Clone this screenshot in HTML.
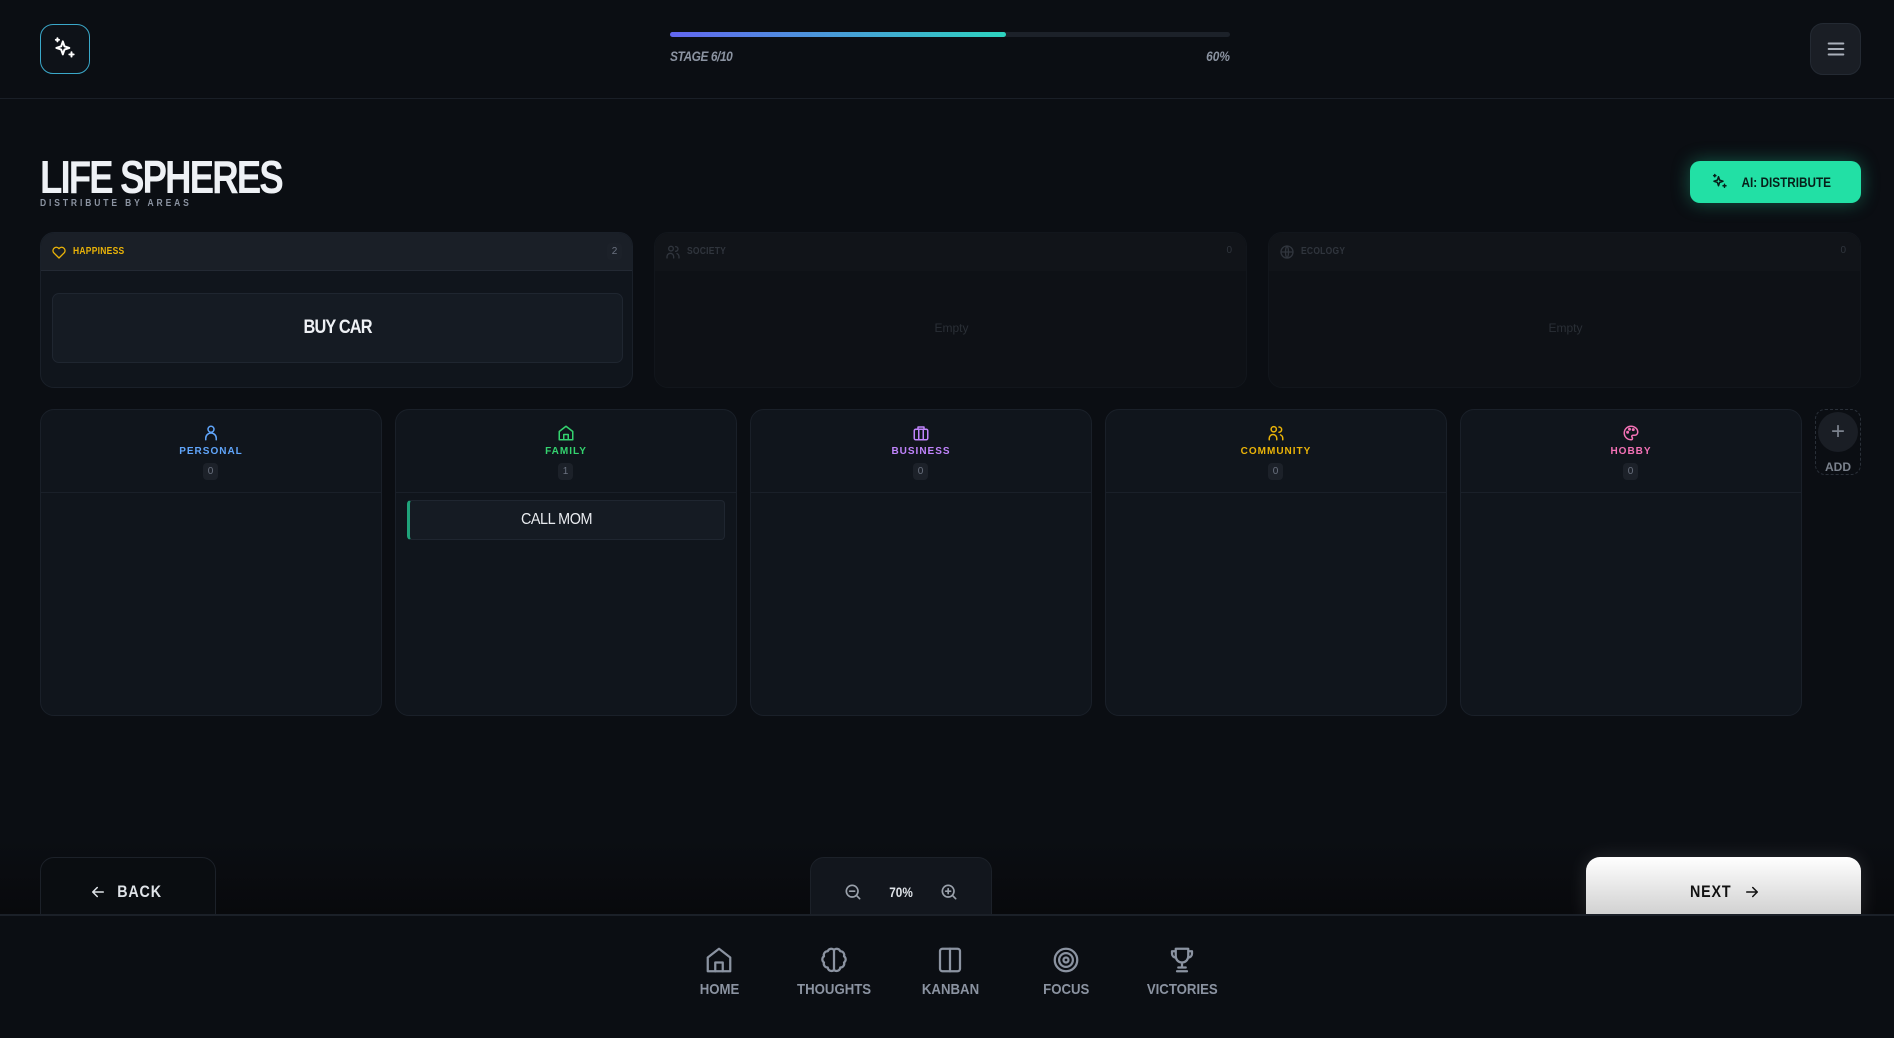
<!DOCTYPE html>
<html><head><meta charset="utf-8">
<style>
*{box-sizing:border-box;margin:0;padding:0}
body{width:1894px;height:1038px;background:#0b0e13;font-family:"Liberation Sans",sans-serif;color:#e5e7eb;position:relative;overflow:hidden}
.a{position:absolute}
.c{display:flex;align-items:center;justify-content:center}
.n{display:inline-block;transform:scaleX(.84)}
svg{fill:none;stroke-linecap:round;stroke-linejoin:round}
.card{background:#10151c;border:1px solid #1a2029;border-radius:14px}
.cnt{background:#1c2129;color:#6b7280;font-size:10px;border-radius:4px;width:15px;height:17px}
.lbl{font-weight:bold;font-size:10px;letter-spacing:1px}
.nav{width:100px;text-align:center;color:#8b93a1;font-weight:bold;font-size:15px}
</style></head><body>
<!-- header -->
<div class="a" style="left:0;top:0;width:1894px;height:99px;border-bottom:1px solid #1a1f27"></div>
<div class="a c" style="left:40px;top:24px;width:50px;height:50px;border-radius:13px;border:1.5px solid #3aa8c9;background:#0e1218">
<svg width="26" height="26" viewBox="0 0 24 24" stroke="#fff" stroke-width="1.8"><path d="M10 5l1.5 4.5L16 11l-4.5 1.5L10 17l-1.5-4.5L4 11l4.5-1.5z"/><path d="M5 2v3M3.5 3.5h3M18 15v4M16 17h4"/></svg></div>
<div class="a" style="left:670px;top:32px;width:560px;height:5px;border-radius:3px;background:#1c2129"></div>
<div class="a" style="left:670px;top:32px;width:336px;height:5px;border-radius:3px;background:linear-gradient(90deg,#6366f1,#2dd4bf)"></div>
<div class="a" style="left:670px;top:48px;font-size:14px;font-style:italic;font-weight:bold;color:#8b93a1;letter-spacing:-.5px;transform:scaleX(.85);transform-origin:left">STAGE 6/10</div>
<div class="a" style="left:1180px;top:48px;width:50px;text-align:right;font-size:14px;font-style:italic;font-weight:bold;color:#8b93a1;transform:scaleX(.85);transform-origin:right">60%</div>
<div class="a c" style="left:1810px;top:23px;width:51px;height:52px;border-radius:13px;background:#1a1e25;border:1px solid #242a33">
<svg width="22" height="22" viewBox="0 0 24 24" stroke="#aab0ba" stroke-width="2.2"><path d="M4 6h16M4 12h16M4 18h16"/></svg></div>
<!-- title -->
<div class="a" style="left:40px;top:150px;font-size:46px;font-weight:bold;letter-spacing:-2.5px;color:#eef1f5;transform:scaleX(.8);transform-origin:left">LIFE SPHERES</div>
<div class="a" style="left:40px;top:198px;font-size:10px;font-weight:bold;letter-spacing:3.4px;color:#8b93a1;transform:scaleX(.85);transform-origin:left">DISTRIBUTE BY AREAS</div>
<div class="a c" style="left:1690px;top:161px;width:171px;height:42px;border-radius:10px;background:#22e0a5;box-shadow:0 0 18px rgba(34,224,165,.35);color:#07201a;font-weight:bold;font-size:14px;gap:4px">
<svg width="18" height="18" viewBox="0 0 24 24" stroke="#07201a" stroke-width="2"><path d="M10 5l1.5 4.5L16 11l-4.5 1.5L10 17l-1.5-4.5L4 11l4.5-1.5z"/><path d="M5 2v3M3.5 3.5h3M18 15v4M16 17h4"/></svg><span class="n">AI: DISTRIBUTE</span></div>
<!-- top cards -->
<div class="a card" style="left:40px;top:232px;width:593px;height:156px;overflow:hidden">
 <div style="height:38px;background:#1a1f27;border-bottom:1px solid #232933;position:relative">
  <svg class="a" style="left:10px;top:11px" width="16" height="16" viewBox="0 0 24 24" stroke="#eab308" stroke-width="2"><path d="M12 21l-8-8a5 5 0 017-7l1 1 1-1a5 5 0 017 7z"/></svg>
  <div class="a lbl" style="left:32px;top:13px;color:#eab308;letter-spacing:.3px;transform:scaleX(.85);transform-origin:left">HAPPINESS</div>
  <div class="a c cnt" style="right:10px;top:10px">2</div>
 </div>
 <div class="a c" style="left:11px;top:60px;width:571px;height:70px;background:#151b23;border:1px solid #1f2630;border-radius:7px;font-weight:bold;font-size:19px;letter-spacing:-1px;color:#eef1f5"><span class="n" style="transform:scaleX(.86)">BUY CAR</span></div>
</div>
<div class="a card" style="left:654px;top:232px;width:593px;height:156px;overflow:hidden;background:#0e1116;border-color:#12161c">
 <div style="height:38px;background:#111419;position:relative">
  <svg class="a" style="left:10px;top:11px" width="16" height="16" viewBox="0 0 24 24" stroke="#30353d" stroke-width="2"><circle cx="9" cy="7" r="3.5"/><path d="M3 21v-2a5 5 0 0110 0v2M16 4a3.5 3.5 0 010 7M21 21v-2a5 5 0 00-3-4.5"/></svg>
  <div class="a lbl" style="left:32px;top:13px;color:#30353d;letter-spacing:.3px;transform:scaleX(.85);transform-origin:left">SOCIETY</div>
  <div class="a" style="right:14px;top:12px;color:#30353d;font-size:10px">0</div>
 </div>
 <div class="a" style="left:0;top:88px;width:593px;text-align:center;color:#2a2f36;font-size:12px">Empty</div>
</div>
<div class="a card" style="left:1268px;top:232px;width:593px;height:156px;overflow:hidden;background:#0e1116;border-color:#12161c">
 <div style="height:38px;background:#111419;position:relative">
  <svg class="a" style="left:10px;top:11px" width="16" height="16" viewBox="0 0 24 24" stroke="#30353d" stroke-width="2"><circle cx="12" cy="12" r="9"/><path d="M3 12h18M12 3c3 3 3 15 0 18M12 3c-3 3-3 15 0 18"/></svg>
  <div class="a lbl" style="left:32px;top:13px;color:#30353d;letter-spacing:.3px;transform:scaleX(.85);transform-origin:left">ECOLOGY</div>
  <div class="a" style="right:14px;top:12px;color:#30353d;font-size:10px">0</div>
 </div>
 <div class="a" style="left:0;top:88px;width:593px;text-align:center;color:#2a2f36;font-size:12px">Empty</div>
</div>
<!-- columns -->
<div class="a card" style="left:40px;top:409px;width:342px;height:307px"><div style="height:83px;border-bottom:1px solid #1a2029"></div></div>
<div class="a card" style="left:395px;top:409px;width:342px;height:307px"><div style="height:83px;border-bottom:1px solid #1a2029"></div></div>
<div class="a card" style="left:750px;top:409px;width:342px;height:307px"><div style="height:83px;border-bottom:1px solid #1a2029"></div></div>
<div class="a card" style="left:1105px;top:409px;width:342px;height:307px"><div style="height:83px;border-bottom:1px solid #1a2029"></div></div>
<div class="a card" style="left:1460px;top:409px;width:342px;height:307px"><div style="height:83px;border-bottom:1px solid #1a2029"></div></div>

<svg class="a" style="left:202px;top:424px" width="18" height="18" viewBox="0 0 24 24" stroke="#60a5fa" stroke-width="2"><circle cx="12" cy="7" r="4"/><path d="M5 21v-2a7 7 0 0114 0v2"/></svg>
<div class="a lbl" style="left:40px;top:446px;width:342px;text-align:center;color:#60a5fa">PERSONAL</div>
<div class="a c cnt" style="left:203px;top:463px">0</div>

<svg class="a" style="left:557px;top:424px" width="18" height="18" viewBox="0 0 24 24" stroke="#34d36f" stroke-width="2"><path d="M3 10l9-7 9 7v11H3z"/><path d="M9 21v-7h6v7"/></svg>
<div class="a lbl" style="left:395px;top:446px;width:342px;text-align:center;color:#34d36f">FAMILY</div>
<div class="a c cnt" style="left:558px;top:463px">1</div>
<div class="a c" style="left:407px;top:500px;width:318px;height:40px;padding-right:22px;background:#151b23;border:1px solid #1f2630;border-left:3px solid #1fa37a;border-radius:4px;font-size:16px;color:#e8ebef;letter-spacing:-.5px"><span class="n" style="transform:scaleX(.9)">CALL MOM</span></div>

<svg class="a" style="left:912px;top:424px" width="18" height="18" viewBox="0 0 24 24" stroke="#c084fc" stroke-width="2"><rect x="3" y="7" width="18" height="14" rx="2"/><path d="M8 7V4h8v3M9 7v14M15 7v14"/></svg>
<div class="a lbl" style="left:750px;top:446px;width:342px;text-align:center;color:#c084fc">BUSINESS</div>
<div class="a c cnt" style="left:913px;top:463px">0</div>

<svg class="a" style="left:1267px;top:424px" width="18" height="18" viewBox="0 0 24 24" stroke="#eab308" stroke-width="2"><circle cx="9" cy="7" r="3.5"/><path d="M3 21v-2a5 5 0 0110 0v2M16 4a3.5 3.5 0 010 7M21 21v-2a5 5 0 00-3-4.5"/></svg>
<div class="a lbl" style="left:1105px;top:446px;width:342px;text-align:center;color:#eab308">COMMUNITY</div>
<div class="a c cnt" style="left:1268px;top:463px">0</div>

<svg class="a" style="left:1622px;top:424px" width="18" height="18" viewBox="0 0 24 24" stroke="#f472b6" stroke-width="2"><path d="M12 3a9 9 0 000 18c1.5 0 2-1 2-2s-1-1.5-1-2.5 1-1.5 2-1.5h2a4 4 0 004-4c0-4.5-4-8-9-8z"/><circle cx="7.5" cy="11" r="1"/><circle cx="10" cy="7" r="1"/><circle cx="15" cy="7.5" r="1"/></svg>
<div class="a lbl" style="left:1460px;top:446px;width:342px;text-align:center;color:#f472b6">HOBBY</div>
<div class="a c cnt" style="left:1623px;top:463px">0</div>

<div class="a" style="left:1815px;top:409px;width:46px;height:66px;border:1.5px dashed #2a3039;border-radius:10px"></div>
<div class="a c" style="left:1818px;top:412px;width:40px;height:40px;border-radius:50%;background:#1a1e25;color:#7b828d;font-size:24px">+</div>
<div class="a" style="left:1815px;top:460px;width:46px;text-align:center;color:#7b828d;font-size:12px;font-weight:bold">ADD</div>

<!-- bottom bar -->
<div class="a" style="left:0;top:840px;width:1894px;height:75px;background:linear-gradient(#0b0e13,#08090c)"></div>
<div class="a c" style="left:40px;top:857px;width:176px;height:60px;padding-top:10px;border:1px solid #1c2129;border-radius:14px 14px 0 0;background:#0a0d11;font-weight:bold;font-size:17px;letter-spacing:1px;gap:6px;color:#dfe3e8">
<svg width="18" height="18" viewBox="0 0 24 24" stroke="#dfe3e8" stroke-width="2"><path d="M19 12H5M11 6l-6 6 6 6"/></svg><span class="n">BACK</span></div>
<div class="a c" style="left:810px;top:857px;width:182px;height:60px;padding-top:10px;border:1px solid #1c2129;border-radius:14px 14px 0 0;background:#12161d;gap:24px;font-weight:bold;font-size:14px;color:#dfe3e8">
<svg width="20" height="20" viewBox="0 0 24 24" stroke="#9aa1ab" stroke-width="2"><circle cx="11" cy="11" r="7"/><path d="M8 11h6M16 16l4 4"/></svg><span class="n">70%</span><svg width="20" height="20" viewBox="0 0 24 24" stroke="#9aa1ab" stroke-width="2"><circle cx="11" cy="11" r="7"/><path d="M8 11h6M11 8v6M16 16l4 4"/></svg></div>
<div class="a c" style="left:1586px;top:857px;width:275px;height:60px;padding-top:10px;border-radius:14px 14px 0 0;background:linear-gradient(#fff,#cfcfcf);box-shadow:0 0 20px rgba(255,255,255,.12);font-weight:bold;font-size:17px;letter-spacing:1px;gap:8px;color:#111"><span class="n">NEXT</span>
<svg width="18" height="18" viewBox="0 0 24 24" stroke="#111" stroke-width="2"><path d="M5 12h14M13 6l6 6-6 6"/></svg></div>
<div class="a" style="left:0;top:914px;width:1894px;height:124px;background:#0b0e13;border-top:2px solid #1b2028"></div>

<svg class="a" style="left:704px;top:945px" width="30" height="30" viewBox="0 0 24 24" stroke="#8b93a1" stroke-width="1.8"><path d="M3 10l9-7 9 7v11H3z"/><path d="M9 21v-7h6v7"/></svg>
<div class="a nav" style="left:669px;top:981px"><span class="n" style="transform:scaleX(.88)">HOME</span></div>
<svg class="a" style="left:819px;top:945px" width="30" height="30" viewBox="0 0 24 24" stroke="#8b93a1" stroke-width="1.8"><path d="M12 4a3 3 0 00-5 1 3 3 0 00-3 4 3 3 0 000 5 3 3 0 003 4 3 3 0 005 2zM12 4a3 3 0 015 1 3 3 0 013 4 3 3 0 010 5 3 3 0 01-3 4 3 3 0 01-5 2z"/></svg>
<div class="a nav" style="left:784px;top:981px"><span class="n" style="transform:scaleX(.88)">THOUGHTS</span></div>
<svg class="a" style="left:935px;top:945px" width="30" height="30" viewBox="0 0 24 24" stroke="#8b93a1" stroke-width="1.8"><rect x="4" y="3" width="16" height="18" rx="2"/><path d="M12 3v18"/></svg>
<div class="a nav" style="left:900px;top:981px"><span class="n" style="transform:scaleX(.88)">KANBAN</span></div>
<svg class="a" style="left:1051px;top:945px" width="30" height="30" viewBox="0 0 24 24" stroke="#8b93a1" stroke-width="1.8"><circle cx="12" cy="12" r="9"/><circle cx="12" cy="12" r="5.5"/><circle cx="12" cy="12" r="2"/></svg>
<div class="a nav" style="left:1016px;top:981px"><span class="n" style="transform:scaleX(.88)">FOCUS</span></div>
<svg class="a" style="left:1167px;top:945px" width="30" height="30" viewBox="0 0 24 24" stroke="#8b93a1" stroke-width="1.8"><path d="M7 3h10v6a5 5 0 01-10 0zM7 5H4v2a3 3 0 003 3M17 5h3v2a3 3 0 01-3 3M12 14v4M8 21h8M9 18h6"/></svg>
<div class="a nav" style="left:1132px;top:981px"><span class="n" style="transform:scaleX(.88)">VICTORIES</span></div>
</body></html>
